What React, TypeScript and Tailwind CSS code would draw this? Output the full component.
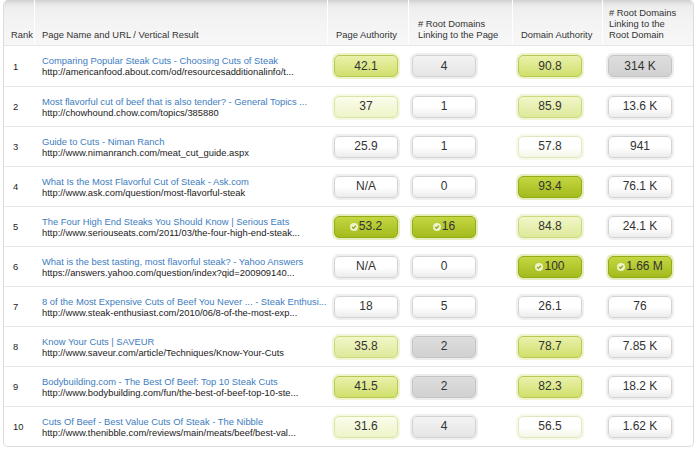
const badge: Record<string, string> = {
  w: "border-[#d3d3d3] bg-[linear-gradient(180deg,#ffffff_0%,#ffffff_50%,#ececec_100%)] shadow-[0_0_0_2px_#efefef]",
  y: "border-[#e0e6c0] bg-[linear-gradient(180deg,#ffffff_0%,#ffffff_50%,#f4f6e6_100%)] shadow-[0_0_0_2px_#f6f8e8]",
  l: "border-[#d2d2d2] bg-[linear-gradient(180deg,#f3f3f3,#e5e5e5)] shadow-[0_0_0_2px_#efefef]",
  g: "border-[#c4c4c4] bg-[linear-gradient(180deg,#dddddd,#d1d1d1)] shadow-[0_0_0_2px_#ececec]",
  p: "border-[#dbe3a8] bg-[linear-gradient(180deg,#fbfdec,#eef4c8)] shadow-[0_0_0_2px_#f5f8e2]",
  lg: "border-[#cbd87c] bg-[linear-gradient(180deg,#f1f6c8,#dfe99a)] shadow-[0_0_0_2px_#f1f5d8]",
  m: "border-[#b9c852] bg-[linear-gradient(180deg,#e9f1ab,#d1df6c)] shadow-[0_0_0_2px_#eef3cc]",
  s: "border-[#96ab18] bg-[linear-gradient(180deg,#c4d642,#a4bb1d)] shadow-[0_0_0_2px_#e6edbc]",
};

type Cell = [string, string, boolean?];

const rows: { title: string; url: string; cells: Cell[] }[] = [
  {
    title: "Comparing Popular Steak Cuts - Choosing Cuts of Steak",
    url: "http://americanfood.about.com/od/resourcesadditionalinfo/t...",
    cells: [["42.1", "m"], ["4", "l"], ["90.8", "m"], ["314 K", "g"]],
  },
  {
    title: "Most flavorful cut of beef that is also tender? - General Topics ...",
    url: "http://chowhound.chow.com/topics/385880",
    cells: [["37", "p"], ["1", "w"], ["85.9", "lg"], ["13.6 K", "w"]],
  },
  {
    title: "Guide to Cuts - Niman Ranch",
    url: "http://www.nimanranch.com/meat_cut_guide.aspx",
    cells: [["25.9", "w"], ["1", "w"], ["57.8", "y"], ["941", "w"]],
  },
  {
    title: "What Is the Most Flavorful Cut of Steak - Ask.com",
    url: "http://www.ask.com/question/most-flavorful-steak",
    cells: [["N/A", "w"], ["0", "w"], ["93.4", "s"], ["76.1 K", "w"]],
  },
  {
    title: "The Four High End Steaks You Should Know | Serious Eats",
    url: "http://www.seriouseats.com/2011/03/the-four-high-end-steak...",
    cells: [["53.2", "s", true], ["16", "s", true], ["84.8", "lg"], ["24.1 K", "w"]],
  },
  {
    title: "What is the best tasting, most flavorful steak? - Yahoo Answers",
    url: "https://answers.yahoo.com/question/index?qid=200909140...",
    cells: [["N/A", "w"], ["0", "w"], ["100", "s", true], ["1.66 M", "s", true]],
  },
  {
    title: "8 of the Most Expensive Cuts of Beef You Never ... - Steak Enthusi...",
    url: "http://www.steak-enthusiast.com/2010/06/8-of-the-most-exp...",
    cells: [["18", "w"], ["5", "w"], ["26.1", "w"], ["76", "w"]],
  },
  {
    title: "Know Your Cuts | SAVEUR",
    url: "http://www.saveur.com/article/Techniques/Know-Your-Cuts",
    cells: [["35.8", "lg"], ["2", "g"], ["78.7", "m"], ["7.85 K", "w"]],
  },
  {
    title: "Bodybuilding.com - The Best Of Beef: Top 10 Steak Cuts",
    url: "http://www.bodybuilding.com/fun/the-best-of-beef-top-10-ste...",
    cells: [["41.5", "m"], ["2", "g"], ["82.3", "m"], ["18.2 K", "w"]],
  },
  {
    title: "Cuts Of Beef - Best Value Cuts Of Steak - The Nibble",
    url: "http://www.thenibble.com/reviews/main/meats/beef/best-val...",
    cells: [["31.6", "p"], ["4", "l"], ["56.5", "y"], ["1.62 K", "w"]],
  },
];

const cols = "grid grid-cols-[30px_293px_81px_104px_90px_91px]";
const badgePad = ["pl-[7px]", "pl-[4px]", "pl-[6px]", "pl-[6px]"];

const Check = () => (
  <svg width="8" height="8" viewBox="0 0 8 8" className="mr-[1px] shrink-0">
    <circle cx="4" cy="4" r="4" fill="#eef4cc" />
    <path d="M2.1 4.1 L3.5 5.4 L5.9 2.7" fill="none" stroke="#8ea514" strokeWidth="1.3" />
  </svg>
);

export default function App() {
  return (
    <div className="bg-white w-[700px] h-[450px] font-['Liberation_Sans',Arial,sans-serif] text-[9.4px] leading-[11px] text-[#333]">
      <div className="ml-[3px] w-[691px] border border-t-0 border-[#dcdcdc] rounded-[5px] overflow-hidden">
        <div className={`${cols} h-[46px] bg-[linear-gradient(180deg,#cfcfcf_0px,#e2e2e2_3px,#eeeeee_7px,#f3f3f3_20px,#f7f7f7_100%)] border-b border-[#e6e6e6]`}>
          <div className="flex items-end pl-[7px] pb-[5px]">Rank</div>
          <div className="flex items-end pl-[7px] pb-[5px] border-l border-white">Page Name and URL / Vertical Result</div>
          <div className="flex items-end pl-[8px] pb-[5px] border-l border-white">Page Authority</div>
          <div className="flex items-end pl-[9px] pb-[5px] border-l border-white">
            # Root Domains
            <br />
            Linking to the Page
          </div>
          <div className="flex items-end pl-[8px] pb-[5px] border-l border-white">Domain Authority</div>
          <div className="flex items-end pl-[6px] pb-[5px] border-l border-white">
            # Root Domains
            <br />
            Linking to the
            <br />
            Root Domain
          </div>
        </div>

        {rows.map((r, i) => (
          <div key={i} className={`${cols} h-[40px] ${i > 0 ? "border-t border-[#e8e8e8]" : ""}`}>
            <div className="flex items-center pl-[9px] text-[#222]">{i + 1}</div>
            <div className="flex flex-col justify-center pl-[8px] whitespace-nowrap overflow-hidden">
              <span className="text-[#3d7dc1]">{r.title}</span>
              <span className="text-[#1a1a1a]">{r.url}</span>
            </div>
            {r.cells.map(([v, k, chk], j) => (
              <div key={j} className={`flex items-center ${badgePad[j]}`}>
                <div
                  className={`w-[64px] h-[22px] rounded-[5px] border flex items-center justify-center text-[12px] text-[#333] ${badge[k]}`}
                >
                  {chk && <Check />}
                  {v}
                </div>
              </div>
            ))}
          </div>
        ))}
      </div>
    </div>
  );
}
